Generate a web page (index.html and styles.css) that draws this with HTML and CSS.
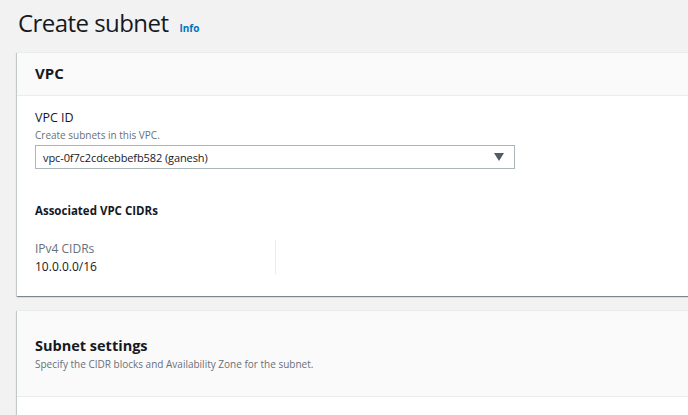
FILE: index.html
```html
<!DOCTYPE html>
<html>
<head>
<meta charset="utf-8">
<link rel="stylesheet" href="styles.css">
</head>
<body>
<div class="page">
  <header class="page-head">
    <h1 class="page-title">Create subnet</h1>
    <a class="info-link">Info</a>
  </header>

  <section class="card">
    <div class="card-head">
      <h2 class="card-title">VPC</h2>
    </div>
    <div class="card-body">
      <div class="field">
        <div class="field-label">VPC ID</div>
        <div class="field-desc">Create subnets in this VPC.</div>
        <div class="select">
          <span class="select-value">vpc-0f7c2cdcebbefb582 (ganesh)</span>
          <svg class="select-caret" width="10" height="8" viewBox="0 0 10 8"><polygon points="0,0 10,0 5,8" fill="#545b64"/></svg>
        </div>
      </div>
      <h3 class="sub-title">Associated VPC CIDRs</h3>
      <div class="kv-grid">
        <div class="kv-col">
          <div class="kv-key">IPv4 CIDRs</div>
          <div class="kv-val">10.0.0.0/16</div>
        </div>
        <div class="kv-col"></div>
      </div>
    </div>
  </section>

  <section class="card card-second">
    <div class="card-head card-head-tall">
      <h2 class="card-title-lg">Subnet settings</h2>
      <p class="card-desc">Specify the CIDR blocks and Availability Zone for the subnet.</p>
    </div>
    <div class="card-body card-body-empty"></div>
  </section>
</div>
</body>
</html>
```

FILE: styles.css
```css
html, body {
  margin: 0;
  padding: 0;
  background: #f2f2f2;
  overflow: hidden;
}
body {
  font-family: "Open Sans", "Noto Sans", sans-serif;
  color: #16191f;
  width: 688px;
  height: 415px;
}
.page {
  padding-left: 17px;
  width: 720px;
}
.page-head {
  display: flex;
  align-items: baseline;
  gap: 11px;
  height: 52px;
  box-sizing: border-box;
  padding-top: 6px;
  padding-left: 1px;
}
.page-title {
  margin: 0;
  font-size: 24px;
  font-weight: 400;
  line-height: 34px;
  letter-spacing: -0.55px;
}
.info-link {
  font-size: 10px;
  font-weight: 700;
  color: #0073bb;
}
.card {
  background: #fff;
  border-top: 1px solid #eaeded;
  box-shadow: 0 1px 1px 0 rgba(0, 28, 36, 0.3), 1px 1px 1px 0 rgba(0, 28, 36, 0.15), -1px 1px 1px 0 rgba(0, 28, 36, 0.15);
}
.card-head {
  background: #fafafa;
  border-bottom: 1px solid #eaeded;
  height: 43px;
  box-sizing: border-box;
  padding: 9px 18px 0;
}
.card-title {
  margin: 0;
  font-size: 15px;
  font-weight: 700;
  line-height: 22px;
}
.card-body {
  padding: 13px 18px 0;
  height: 200px;
  box-sizing: border-box;
}
.field-label {
  font-size: 12.5px;
  line-height: 18px;
}
.field-desc {
  font-size: 10px;
  line-height: 14px;
  color: #687078;
  margin-top: 1px;
}
.select {
  width: 480px;
  height: 24px;
  box-sizing: border-box;
  border: 1px solid #aab7b8;
  margin-top: 3px;
  display: flex;
  align-items: center;
  justify-content: space-between;
  padding: 0 10px 0 7px;
}
.select-value {
  font-size: 11px;
  letter-spacing: -0.1px;
}
.select-caret {
  display: block;
}
.sub-title {
  margin: 34px 0 0;
  font-size: 11.5px;
  font-weight: 700;
  line-height: 16px;
}
.kv-grid {
  display: grid;
  grid-template-columns: 240px 240px;
  margin-top: 21px;
}
.kv-col {
  height: 34px;
}
.kv-col + .kv-col {
  border-left: 1px solid #eaeded;
}
.kv-key {
  font-size: 12px;
  line-height: 17px;
  color: #687078;
}
.kv-val {
  font-size: 12px;
  line-height: 17px;
  margin-top: 1px;
}
.card-second {
  margin-top: 14px;
}
.card-head-tall {
  height: 86px;
  padding-top: 25px;
}
.card-title-lg {
  margin: 0;
  font-size: 14.5px;
  font-weight: 700;
  line-height: 20px;
}
.card-desc {
  margin: 1px 0 0;
  font-size: 10px;
  line-height: 14px;
  color: #687078;
}
.card-body-empty {
  height: 40px;
}
```
